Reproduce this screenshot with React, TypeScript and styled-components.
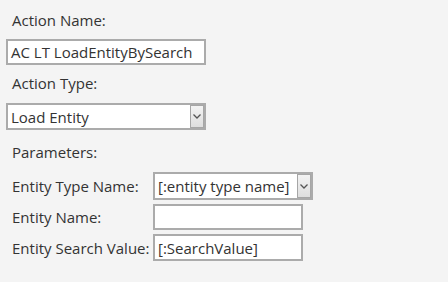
import { FC } from 'react'
import styled, { createGlobalStyle } from 'styled-components'

const GlobalStyle = createGlobalStyle`
  html, body {
    margin: 0;
    padding: 0;
    background: #f4f4f4;
  }
  body {
    font-family: "Segoe UI", "Open Sans", "Noto Sans", sans-serif;
    font-size: 15px;
    color: #333333;
  }
`

const Page = styled.div`
  width: 448px;
  height: 282px;
  padding: 10px 6px 0 6px;
  box-sizing: border-box;
  display: flex;
  flex-direction: column;
  align-items: flex-start;
`

const Label = styled.div<{ $gap?: number }>`
  padding-left: 6px;
  line-height: 20px;
  height: 20px;
  margin-top: ${(p) => p.$gap ?? 0}px;
  white-space: nowrap;
`

const Field = styled.div<{ $w: number; $h: number; $gap?: number }>`
  box-sizing: border-box;
  width: ${(p) => p.$w}px;
  height: ${(p) => p.$h}px;
  margin-top: ${(p) => p.$gap ?? 0}px;
  border: 2px solid #ababab;
  background: #ffffff;
  display: flex;
  align-items: center;
  padding-left: 3px;
  white-space: nowrap;
  overflow: hidden;
`

const FieldText = styled.span`
  flex: 1;
  line-height: 20px;
`

const DropButton = styled.div`
  box-sizing: border-box;
  width: 14px;
  align-self: stretch;
  border: 1px solid #a6a6a6;
  background: linear-gradient(#f3f3f3, #dedede);
  display: flex;
  align-items: center;
  justify-content: center;
`

const ParamGrid = styled.div`
  display: grid;
  grid-template-columns: 147px auto;
  row-gap: 4px;
  margin-top: 10px;
  align-items: center;
`

const Chevron: FC = () => (
  <svg width="8" height="5" viewBox="0 0 8 5">
    <polyline points="0.5,0.5 4,4 7.5,0.5" fill="none" stroke="#555" strokeWidth="1.3" />
  </svg>
)

interface SelectProps {
  w: number
  h: number
  gap?: number
  value: string
}

const SelectBox: FC<SelectProps> = ({ w, h, gap, value }) => (
  <Field $w={w} $h={h} $gap={gap}>
    <FieldText>{value}</FieldText>
    <DropButton><Chevron /></DropButton>
  </Field>
)

const App: FC = () => {
  return (
    <>
      <GlobalStyle />
      <Page>
        <Label>Action Name:</Label>
        <Field $w={200} $h={26} $gap={9}>
          <FieldText>AC LT LoadEntityBySearch</FieldText>
        </Field>

        <Label $gap={8}>Action Type:</Label>
        <SelectBox w={200} h={27} gap={10} value="Load Entity" />

        <Label $gap={12}>Parameters:</Label>

        <ParamGrid>
          <Label>Entity Type Name:</Label>
          <SelectBox w={160} h={28} value="[:entity type name]" />

          <Label>Entity Name:</Label>
          <Field $w={150} $h={26}>
            <FieldText></FieldText>
          </Field>

          <Label>Entity Search Value:</Label>
          <Field $w={150} $h={27}>
            <FieldText>[:SearchValue]</FieldText>
          </Field>
        </ParamGrid>
      </Page>
    </>
  )
}

export default App
